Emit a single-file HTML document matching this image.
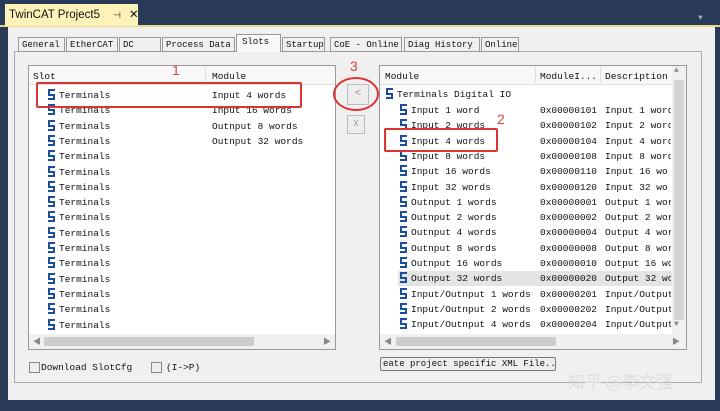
<!DOCTYPE html><html><head><style>
body{margin:0;width:720px;height:411px;background:#293a58;position:relative;overflow:hidden;font-family:"Liberation Mono","Noto Sans CJK SC",monospace;font-size:9px;color:#111}
.a{position:absolute}
.tab{position:absolute;top:37px;border:1px solid #999;background:#f0f0f0;font-size:9px;line-height:14px;padding-left:3px;box-sizing:border-box;height:15px;white-space:nowrap;overflow:hidden}
.row{position:absolute;height:15px;line-height:15px;white-space:pre;font-size:9.5px}
.s{display:inline-block;width:7px;height:11px;vertical-align:-2px;margin-right:4px;position:relative}
.s:before{content:"";position:absolute;left:0;top:0;width:7px;height:11px;background:linear-gradient(#1a4fa0,#1a4fa0) 0 0/7px 2px no-repeat,linear-gradient(#1a4fa0,#1a4fa0) 0 0/2px 6px no-repeat,linear-gradient(#1a4fa0,#1a4fa0) 0 5px/7px 2px no-repeat,linear-gradient(#1a4fa0,#1a4fa0) 5px 5px/2px 6px no-repeat,linear-gradient(#1a4fa0,#1a4fa0) 0 9px/7px 2px no-repeat}
.red{position:absolute;border:2px solid #d33;border-radius:2px}
.rn{position:absolute;color:#d44;font-family:"Liberation Sans",sans-serif;font-size:14px}
</style></head><body>
<div class="a" style="left:0;top:25px;width:720px;height:2px;background:#e8d98a"></div>
<div class="a" style="left:5px;top:4px;width:133px;height:22px;background:#fdf3b8;font-family:'Liberation Sans',sans-serif;font-size:11.5px;line-height:22px;padding-left:4px;box-sizing:border-box;white-space:nowrap">TwinCAT Project5 <span style="font-size:9px;margin-left:10px">⊣</span><span style="margin-left:8px">✕</span></div>
<div class="a" style="left:698px;top:14px;color:#9ab;font-size:8px">▼</div>
<div class="a" style="left:8px;top:27px;width:707px;height:373px;background:#f0f0f0"></div>
<div class="a" style="left:14px;top:51px;width:688px;height:332px;border:1px solid #aaa;background:#f0f0f0;box-sizing:border-box"></div>
<div class="tab" style="left:18px;width:47px">General</div>
<div class="tab" style="left:66px;width:52px">EtherCAT</div>
<div class="tab" style="left:119px;width:42px">DC</div>
<div class="tab" style="left:162px;width:73px">Process Data</div>
<div class="tab" style="left:236px;top:34px;height:18px;width:45px;background:#f8f8f8;border-bottom:none;padding-left:5px">Slots</div>
<div class="tab" style="left:282px;width:43px">Startup</div>
<div class="tab" style="left:330px;width:72px">CoE - Online</div>
<div class="tab" style="left:404px;width:76px">Diag History</div>
<div class="tab" style="left:481px;width:38px">Online</div>
<!-- left list -->
<div class="a" style="left:28px;top:65px;width:308px;height:285px;border:1px solid #999;background:#fff;box-sizing:border-box"></div>
<div class="a" style="left:29px;top:66px;width:306px;height:18px;background:#f8f8f8;border-bottom:1px solid #ddd"></div>
<div class="row" style="left:33px;top:69px">Slot</div><div class="row" style="left:212px;top:69px">Module</div>
<div class="a" style="left:205px;top:67px;width:1px;height:16px;background:#ddd"></div>
<div id="L"></div>
<div class="a" style="left:29px;top:334px;width:306px;height:15px;background:#f0f0f0"></div>
<div class="a" style="left:44px;top:337px;width:210px;height:9px;background:#ccc"></div>
<div class="a" style="left:33px;top:336px;color:#888;font-size:8px">◀</div><div class="a" style="left:323px;top:336px;color:#888;font-size:8px">▶</div>
<!-- right list -->
<div class="a" style="left:379px;top:65px;width:308px;height:285px;border:1px solid #999;background:#fff;box-sizing:border-box"></div>
<div class="a" style="left:380px;top:66px;width:292px;height:18px;background:#f8f8f8;border-bottom:1px solid #ddd"></div>
<div class="row" style="left:385px;top:69px">Module</div><div class="row" style="left:540px;top:69px">ModuleI...</div><div class="row" style="left:605px;top:69px">Description</div>
<div class="a" style="left:535px;top:67px;width:1px;height:16px;background:#ddd"></div><div class="a" style="left:600px;top:67px;width:1px;height:16px;background:#ddd"></div>
<div class="a" style="left:672px;top:66px;width:14px;height:268px;background:#f0f0f0"></div>
<div class="a" style="left:674px;top:80px;width:10px;height:240px;background:#d4d4d4"></div>
<div class="a" style="left:674px;top:66px;color:#888;font-size:8px">▲</div><div class="a" style="left:674px;top:320px;color:#888;font-size:8px">▼</div>
<div id="R"></div>
<div class="a" style="left:380px;top:334px;width:306px;height:15px;background:#f0f0f0"></div>
<div class="a" style="left:396px;top:337px;width:160px;height:9px;background:#ccc"></div>
<div class="a" style="left:384px;top:336px;color:#888;font-size:8px">◀</div><div class="a" style="left:672px;top:336px;color:#888;font-size:8px">▶</div>
<!-- buttons -->
<div class="a" style="left:347px;top:84px;width:20px;height:19px;border:1px solid #bbb;background:#eee;color:#999;text-align:center;line-height:19px;font-size:11px">&lt;</div>
<div class="a" style="left:347px;top:115px;width:16px;height:17px;border:1px solid #bbb;background:#eee;color:#999;text-align:center;line-height:17px">X</div>
<div class="a" style="left:333px;top:77px;width:46px;height:34px;border:2px solid #d33;border-radius:50%;box-sizing:border-box"></div>
<div class="rn" style="left:350px;top:58px">3</div>
<div class="red" style="left:36px;top:82px;width:262px;height:22px"></div><div class="rn" style="left:172px;top:62px">1</div>
<div class="red" style="left:384px;top:128px;width:110px;height:20px"></div><div class="rn" style="left:497px;top:111px">2</div>
<!-- bottom -->
<div class="a" style="left:29px;top:362px;width:9px;height:9px;border:1px solid #888;background:#eee"></div><div class="row" style="left:41px;top:360px">Download SlotCfg</div>
<div class="a" style="left:151px;top:362px;width:9px;height:9px;border:1px solid #888;background:#eee"></div><div class="row" style="left:166px;top:360px">(I-&gt;P)</div>
<div class="a" style="left:380px;top:357px;width:176px;height:14px;border:1px solid #777;border-radius:2px;background:#eee;line-height:13px;padding-left:2px;white-space:pre;box-sizing:border-box;font-size:9px;overflow:hidden">eate project specific XML File..</div>
<div class="a" style="left:568px;top:368px;font-family:'Noto Sans CJK SC',sans-serif;font-size:17px;color:#ddd">知乎 @李文强</div>
<script>
var L=["Input 4 words","Input 16 words","Outnput 8 words","Outnput 32 words"],h="";
for(var i=0;i<16;i++){var y=88+i*15.3;h+='<div class="row" style="left:48px;top:'+y+'px"><span class="s"></span>Terminals</div>';if(L[i])h+='<div class="row" style="left:212px;top:'+y+'px">'+L[i]+'</div>';}
document.getElementById("L").innerHTML=h;
var R=[["Input 1 word","101","Input 1 word"],["Input 2 words","102","Input 2 word"],["Input 4 words","104","Input 4 word"],["Input 8 words","108","Input 8 word"],["Input 16 words","110","Input 16 wo"],["Input 32 words","120","Input 32 wo"],["Outnput 1 words","001","Output 1 wor"],["Outnput 2 words","002","Output 2 wor"],["Outnput 4 words","004","Output 4 wor"],["Outnput 8 words","008","Output 8 wor"],["Outnput 16 words","010","Output 16 wo"],["Outnput 32 words","020","Output 32 wo"],["Input/Outnput 1 words","201","Input/Output"],["Input/Outnput 2 words","202","Input/Output"],["Input/Outnput 4 words","204","Input/Output"]];
h='<div class="row" style="left:386px;top:87px"><span class="s"></span>Terminals Digital IO</div>';
for(i=0;i<R.length;i++){y=103+i*15.3;h+=(i==11?'<div class="a" style="left:398px;top:'+y+'px;width:274px;height:15px;background:#e4e4e4"></div>':'')+'<div class="row" style="left:400px;top:'+y+'px"><span class="s"></span>'+R[i][0]+'</div><div class="row" style="left:540px;top:'+y+'px">0x00000'+R[i][1]+'</div><div class="row" style="left:605px;top:'+y+'px;width:66px;overflow:hidden">'+R[i][2]+'</div>';}
document.getElementById("R").innerHTML=h;
</script>
</body></html>
